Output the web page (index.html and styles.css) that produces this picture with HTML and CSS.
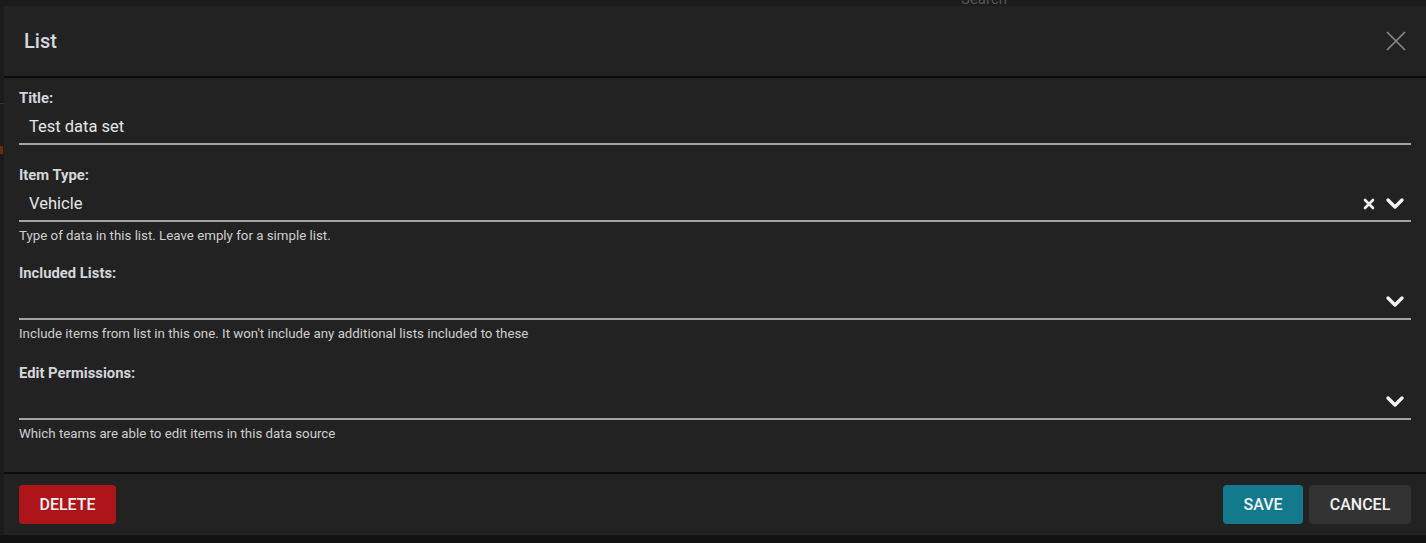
FILE: index.html
```html
<!DOCTYPE html>
<html lang="en">
<head>
    <meta charset="UTF-8">
    <title>List</title>
    <link rel="stylesheet" href="styles.css">
</head>
<body>
    <div class="page-behind">
        <span class="search-ghost">Search</span>
        <span class="ghost-line"></span>
        <span class="ghost-dot"></span>
    </div>

    <div class="modal">
        <div class="modal-header">
            <h1>List</h1>
            <svg class="close" width="22" height="22" viewBox="0 0 22 22">
                <path d="M2 2 L20 20 M20 2 L2 20" stroke="#8a8a8a" stroke-width="1.6" fill="none"/>
            </svg>
        </div>

        <div class="modal-body">
            <div class="field">
                <label>Title:</label>
                <div class="input"><span class="value">Test data set</span></div>
            </div>

            <div class="field with-help">
                <label>Item Type:</label>
                <div class="input">
                    <span class="value">Vehicle</span>
                    <span class="icons">
                        <svg width="12" height="12" viewBox="0 0 12 12"><path d="M2 2 L10 10 M10 2 L2 10" stroke="#eee" stroke-width="2.6" stroke-linecap="round"/></svg>
                        <svg class="chev" width="20" height="14" viewBox="0 0 20 14"><path d="M3 3 L10 10 L17 3" stroke="#f2f2f2" stroke-width="3.4" fill="none" stroke-linecap="round" stroke-linejoin="round"/></svg>
                    </span>
                </div>
                <p class="help">Type of data in this list. Leave emply for a simple list.</p>
            </div>

            <div class="field">
                <label>Included Lists:</label>
                <div class="input">
                    <span class="value"></span>
                    <span class="icons">
                        <svg class="chev" width="20" height="14" viewBox="0 0 20 14"><path d="M3 3 L10 10 L17 3" stroke="#f2f2f2" stroke-width="3.4" fill="none" stroke-linecap="round" stroke-linejoin="round"/></svg>
                    </span>
                </div>
                <p class="help">Include items from list in this one. It won't include any additional lists included to these</p>
            </div>

            <div class="field last">
                <label>Edit Permissions:</label>
                <div class="input">
                    <span class="value"></span>
                    <span class="icons">
                        <svg class="chev" width="20" height="14" viewBox="0 0 20 14"><path d="M3 3 L10 10 L17 3" stroke="#f2f2f2" stroke-width="3.4" fill="none" stroke-linecap="round" stroke-linejoin="round"/></svg>
                    </span>
                </div>
                <p class="help">Which teams are able to edit items in this data source</p>
            </div>
        </div>

        <div class="modal-footer">
            <button class="btn btn-delete">Delete</button>
            <div class="right">
                <button class="btn btn-save">Save</button>
                <button class="btn btn-cancel">Cancel</button>
            </div>
        </div>
    </div>
</body>
</html>
```

FILE: styles.css
```css
body {
    margin: 0;
    background-color: #121212;
    font-family: Roboto, "Liberation Sans", Arial, sans-serif;
    color: #ddd;
    overflow: hidden;
}
.page-behind {
    position: absolute;
    left: 0;
    top: 0;
    width: 1426px;
    height: 535px;
    background: #1b1b1b;
}
.search-ghost {
    position: absolute;
    left: 961px;
    top: -10px;
    font-size: 15px;
    color: #555;
}
.ghost-line {
    position: absolute;
    left: 0;
    top: 103px;
    width: 4px;
    height: 1px;
    background: #5a2a10;
}
.ghost-dot {
    position: absolute;
    left: 0;
    top: 146px;
    width: 3px;
    height: 8px;
    background: #6a2c0c;
}
.modal {
    position: relative;
    margin: 6px 0 0 4px;
    width: 1422px;
    height: 529px;
    background: #222222;
    display: flex;
    flex-direction: column;
}
.modal-header {
    height: 71px;
    border-bottom: 2px solid #0c0c0c;
    display: flex;
    align-items: center;
    justify-content: space-between;
    padding: 0 20px;
}
.modal-header h1 {
    margin: 0;
    font-size: 20px;
    font-weight: 500;
    color: #d5d9df;
}
.close {
    margin-right: -1px;
    margin-top: -1px;
}
.modal-body {
    padding: 10px 15px 29px 15px;
}
.field {
    margin-bottom: 20px;
}
.field.with-help {
    margin-bottom: 18px;
}
.field.last {
    margin-bottom: 0;
}
label {
    display: block;
    font-size: 14.8px;
    font-weight: 700;
    line-height: 20px;
    color: #d3d6da;
}
.input {
    height: 35px;
    border-bottom: 2px solid #a3a3a3;
    display: flex;
    align-items: center;
    justify-content: space-between;
    padding: 2px 0 0 10px;
    box-sizing: border-box;
    height: 37px;
}
.value {
    font-size: 16.5px;
    color: #e6e6e6;
}
.icons {
    display: flex;
    align-items: center;
    gap: 10px;
    margin-right: 6px;
}
.help {
    margin: 5px 0 0 0;
    font-size: 13.3px;
    line-height: 18px;
    color: #cfcfcf;
}
.modal-footer {
    border-top: 2px solid #0c0c0c;
    padding: 11px 15px 11px 15px;
    display: flex;
    justify-content: space-between;
}
.right {
    display: flex;
    gap: 6px;
}
.btn {
    height: 39px;
    border: none;
    border-radius: 4px;
    font-family: Roboto, "Liberation Sans", Arial, sans-serif;
    font-size: 16px;
    font-weight: 500;
    text-transform: uppercase;
    color: #f2f2f2;
    padding: 0 20px;
}
.btn-delete {
    width: 97px;
    background: #ad151b;
}
.btn-save {
    width: 80px;
    background: #127a8c;
}
.btn-cancel {
    width: 102px;
    background: #333333;
}
```
